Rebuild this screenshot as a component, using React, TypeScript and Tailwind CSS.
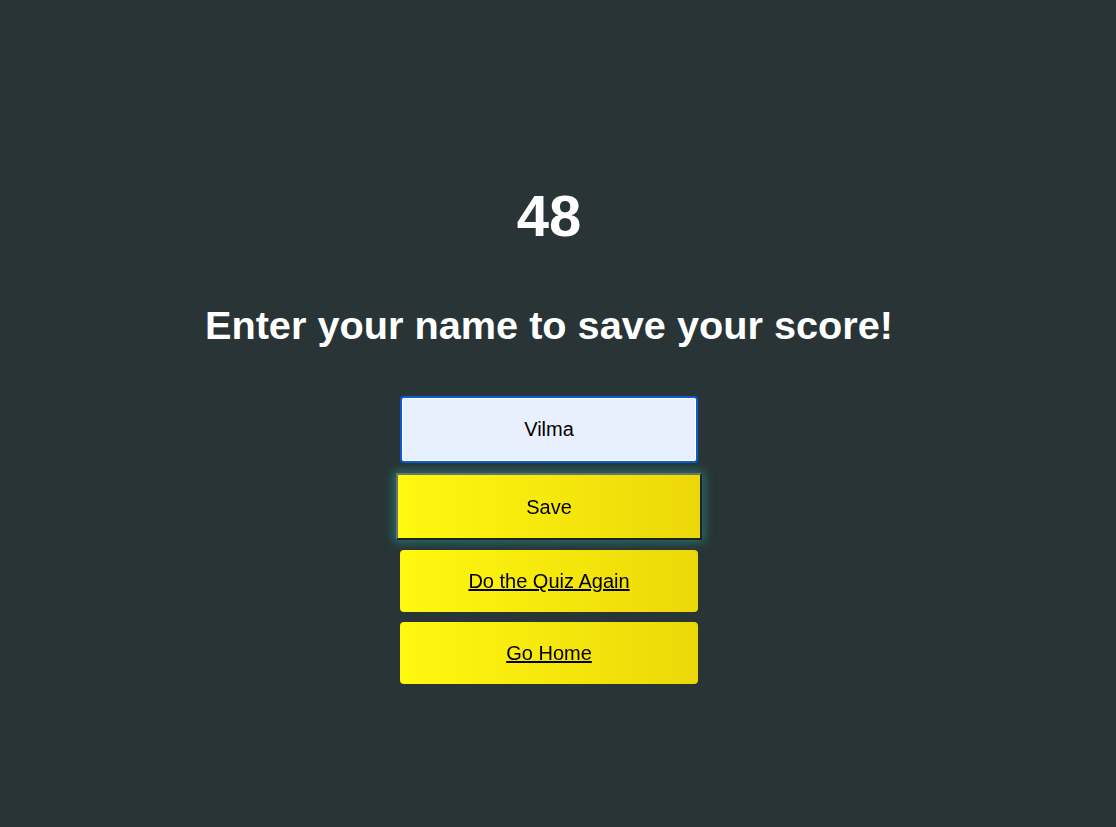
import { useState } from 'react';

const btn =
  'flex items-center justify-center w-[298px] h-[62px] rounded-[4px] bg-gradient-to-r from-[#fff810] to-[#ecd808] text-[20px] text-black underline';

export default function App() {
  const [name, setName] = useState('Vilma');

  return (
    <div
      className="min-h-[827px] w-full bg-[#283435] flex flex-col items-center pt-[183px] pr-[18px]"
      style={{ fontFamily: '"Liberation Sans", Arial, sans-serif' }}
    >
      <h1 className="text-[58px] leading-[66px] font-bold text-white">48</h1>
      <h2 className="mt-[53px] text-[39.7px] leading-[46px] font-bold text-white">
        Enter your name to save your score!
      </h2>
      <form className="mt-[48px] flex flex-col items-center" onSubmit={(e) => e.preventDefault()}>
        <input
          autoFocus
          value={name}
          onChange={(e) => setName(e.target.value)}
          className="w-[298px] h-[67px] rounded-[4px] bg-[#e8f0fe] text-center text-[20px] text-black border-2 border-[#0b5ad4] outline outline-1 -outline-offset-3 outline-white"
        />
        <button
          type="submit"
          className="mt-[10px] w-[306px] h-[67px] bg-gradient-to-r from-[#fff810] to-[#ecd808] text-[20px] text-black border-2 border-t-[#707070] border-l-[#707070] border-r-[#1e2222] border-b-[#1e2222] shadow-[0_0_10px_2px_rgba(40,170,160,0.55)]"
        >
          Save
        </button>
        <a href="#" className={`mt-[10px] ${btn}`}>
          Do the Quiz Again
        </a>
        <a href="#" className={`mt-[10px] ${btn}`}>
          Go Home
        </a>
      </form>
    </div>
  );
}
